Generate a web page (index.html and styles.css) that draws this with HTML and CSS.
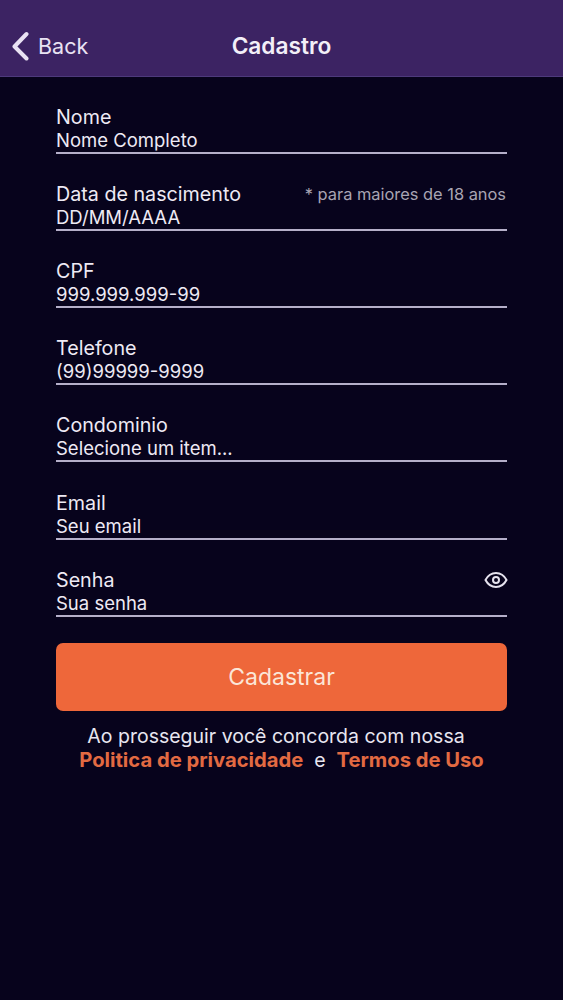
FILE: index.html
```html
<!DOCTYPE html>
<html lang="pt-BR">
<head>
<meta charset="utf-8">
<title>Cadastro</title>
<link rel="stylesheet" href="styles.css">
</head>
<body>
<header class="navbar">
  <a class="back">
    <svg class="chevron" width="20" height="30" viewBox="0 0 20 30"><path d="M16.500 3 L4.500 15.500 L16.500 27.500" fill="none" stroke="currentColor" stroke-width="4" stroke-linecap="round" stroke-linejoin="round"/></svg>
    <span>Back</span>
  </a>
  <h1 class="title">Cadastro</h1>
</header>
<main class="form">
  <div class="field"><div class="label-row"><span class="label">Nome</span></div><div class="value">Nome Completo</div></div>
  <div class="field"><div class="label-row"><span class="label">Data de nascimento</span><span class="hint">* para maiores de 18 anos</span></div><div class="value">DD/MM/AAAA</div></div>
  <div class="field"><div class="label-row"><span class="label">CPF</span></div><div class="value">999.999.999-99</div></div>
  <div class="field"><div class="label-row"><span class="label">Telefone</span></div><div class="value">(99)99999-9999</div></div>
  <div class="field"><div class="label-row"><span class="label">Condominio</span></div><div class="value">Selecione um item...</div></div>
  <div class="field"><div class="label-row"><span class="label">Email</span></div><div class="value">Seu email</div></div>
  <div class="field"><div class="label-row"><span class="label">Senha</span>
    <svg class="eye" width="24" height="18" viewBox="0 0 24 18"><path d="M1.500 9 C4 4.300 7.700 2 12 2 C16.300 2 20 4.300 22.500 9 C20 13.700 16.300 16 12 16 C7.700 16 4 13.700 1.500 9 Z" fill="none" stroke="currentColor" stroke-width="2"/><circle cx="12" cy="9" r="3" fill="none" stroke="currentColor" stroke-width="2"/></svg>
  </div><div class="value">Sua senha</div></div>
  <button class="submit" type="button">Cadastrar</button>
  <div class="terms"><div class="terms-lead">Ao prosseguir você concorda com nossa</div><div><a class="link">Politica de privacidade</a><span class="sep">e</span><a class="link">Termos de Uso</a></div></div>
</main>
</body>
</html>
```
FILE: styles.css
```css
html, body { margin: 0; padding: 0; }
body {
  width: 563px;
  height: 1000px;
  overflow: hidden;
  background: #07031c;
  color: #eeeaf4;
  font-family: Inter, "Liberation Sans", sans-serif;
}
.navbar {
  height: 77px;
  box-sizing: border-box;
  position: relative;
  display: flex;
  align-items: center;
  justify-content: center;
  padding-top: 15px;
  background: #3c2363;
  border-bottom: 1px solid #4d3a7c;
}
.back {
  position: absolute;
  left: 10px;
  top: 31px;
  display: flex;
  align-items: center;
  gap: 8px;
  font-size: 21.500px;
  color: #e9e2f3;
}
.title {
  margin: 0;
  font-size: 22.700px;
  font-weight: 600;
  color: #f3eff8;
}
.form {
  display: flex;
  flex-direction: column;
  padding: 0 56px;
  margin-top: -0.400px;
}
.field {
  height: 77.170px;
  box-sizing: border-box;
  display: flex;
  flex-direction: column;
  justify-content: flex-end;
}
.label-row {
  display: flex;
  justify-content: space-between;
  align-items: center;
  height: 24px;
  margin-bottom: -1px;
}
.label { font-size: 19.700px; line-height: 24px; }
.hint { font-size: 16.400px; color: #a9a5b3; padding-right: 1px; }
.eye { color: #e6e3ee; margin-right: -1px; }
.value {
  font-size: 18.500px;
  line-height: 24px;
  border-bottom: 2px solid #b5afc9;
}
.submit {
  margin-top: 26.400px;
  height: 68px;
  border: 0;
  border-radius: 7px;
  background: #ee673a;
  color: #fbe6d8;
  font: 400 23px Inter, "Liberation Sans", sans-serif;
}
.terms {
  margin-top: 12.600px;
  text-align: center;
  font-size: 19.500px;
  line-height: 24.500px;
  color: #e8e6f0;
  white-space: nowrap;
}
.terms-lead { padding-right: 11px; }
.link { color: #e26a42; font-weight: 700; font-size: 20.200px; }
.sep { margin: 0 11px; }
```
